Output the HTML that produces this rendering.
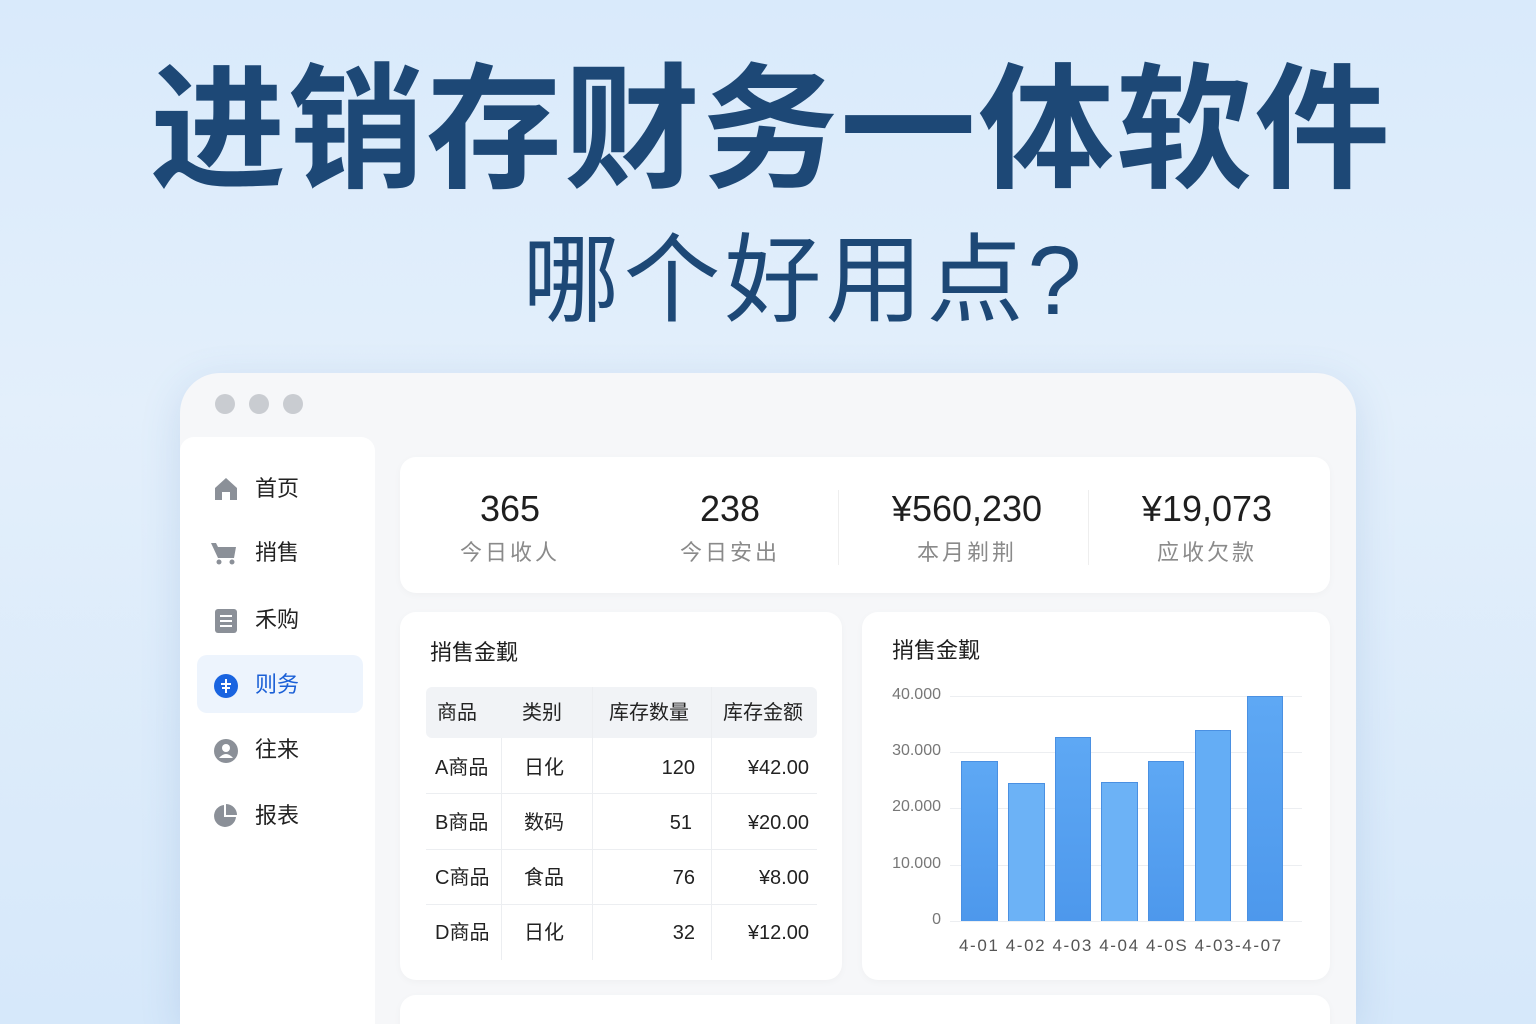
<!DOCTYPE html>
<html><head><meta charset="utf-8"><style>
*{margin:0;padding:0;box-sizing:border-box}
html{width:1536px;height:1024px;overflow:hidden}
body{width:1536px;height:1024px;overflow:hidden;position:relative;font-family:"Liberation Sans","Noto Sans CJK SC",sans-serif;background:linear-gradient(180deg,#d9eafb 0%,#e3effb 40%,#d6e8fa 100%);}
.a{position:absolute;white-space:nowrap}
.t1{left:0;width:1536px;text-align:center;top:60px;font-size:136px;font-weight:bold;color:#1d4876;letter-spacing:2px;line-height:140px;padding-left:6px}
.t2{left:36px;width:1536px;text-align:center;top:226px;font-size:97px;color:#1d4876;line-height:110px;letter-spacing:4px}
.win{left:180px;top:373px;width:1176px;height:651px;background:#f6f7f9;border-radius:40px 40px 0 0;box-shadow:0 10px 40px rgba(80,130,190,.18)}
.dot{width:20px;height:20px;border-radius:50%;background:#c9ccd1;top:394px}
.side{left:180px;top:437px;width:195px;height:587px;background:#fff;border-radius:14px 14px 0 0}
.nav{left:255px;font-size:22px;color:#222;line-height:30px}
.card{background:#fff;border-radius:16px;box-shadow:0 2px 8px rgba(0,0,0,.03)}
.val{font-size:36px;color:#1e1e1e;text-align:center;width:240px;line-height:40px}
.lab{font-size:22px;color:#8a8a8a;text-align:center;width:240px;line-height:30px;letter-spacing:3px}
.td{font-size:20px;color:#222;line-height:30px}
.yl{font-size:16px;color:#777;text-align:right;width:70px;left:871px}
.grid{left:950px;width:352px;height:1px;background:#eceef1}
.bar{background:linear-gradient(#5ea8f4,#4d98ec);border:1px solid #4a90e2;border-bottom:none}
</style></head><body>
<div class="a t1">进销存财务一体软件</div>
<div class="a t2">哪个好用点?</div>
<div class="a win"></div>
<div class="a dot" style="left:215px"></div>
<div class="a dot" style="left:249px"></div>
<div class="a dot" style="left:283px"></div>
<div class="a side"></div>
<div class="a" style="left:197px;top:655px;width:166px;height:58px;background:#edf4fd;border-radius:10px"></div>
<svg class="a" style="left:213px;top:476px" width="26" height="26" viewBox="0 0 26 26"><path d="M2 12 L13 2 L24 12 V24 H17 V16 H9 V24 H2Z" fill="#8b9098"/></svg>
<svg class="a" style="left:210px;top:540px" width="28" height="26" viewBox="0 0 28 26"><path d="M1 3 H6 L8 7 H26 L24 18 H8 Z" fill="#8b9098"/><circle cx="9" cy="22" r="2.5" fill="#8b9098"/><circle cx="22" cy="22" r="2.5" fill="#8b9098"/></svg>
<svg class="a" style="left:214px;top:608px" width="24" height="26" viewBox="0 0 24 26"><rect x="1" y="1" width="22" height="24" rx="3" fill="#8b9098"/><path d="M6 8H18M6 13H18M6 18H18" stroke="#fff" stroke-width="2"/></svg>
<svg class="a" style="left:213px;top:673px" width="26" height="26" viewBox="0 0 26 26"><circle cx="13" cy="13" r="12" fill="#1a64e0"/><path d="M13 6V20M8 11H18M9 15H17" stroke="#fff" stroke-width="2"/></svg>
<svg class="a" style="left:213px;top:738px" width="26" height="26" viewBox="0 0 26 26"><circle cx="13" cy="13" r="12" fill="#8b9098"/><circle cx="13" cy="10" r="4" fill="#fff"/><path d="M6 20 Q13 12 20 20" fill="#fff"/></svg>
<svg class="a" style="left:212px;top:803px" width="26" height="26" viewBox="0 0 26 26"><path d="M12 2 A11 11 0 1 0 24 14 H12Z" fill="#8b9098"/><path d="M14 1 A11 11 0 0 1 25 12 H14Z" fill="#8b9098"/></svg>
<div class="a nav" style="top:474px">首页</div>
<div class="a nav" style="top:538px">捎售</div>
<div class="a nav" style="top:605px">禾购</div>
<div class="a nav" style="top:670px;color:#1a5fd6">则务</div>
<div class="a nav" style="top:735px">往来</div>
<div class="a nav" style="top:801px">报表</div>

<div class="a card" style="left:400px;top:457px;width:930px;height:136px"></div>
<div class="a" style="left:838px;top:490px;width:1px;height:75px;background:#eee"></div>
<div class="a" style="left:1088px;top:490px;width:1px;height:75px;background:#eee"></div>
<div class="a val" style="left:390px;top:489px">365</div>
<div class="a val" style="left:610px;top:489px">238</div>
<div class="a val" style="left:847px;top:489px">¥560,230</div>
<div class="a val" style="left:1087px;top:489px">¥19,073</div>
<div class="a lab" style="left:390px;top:538px">今日收人</div>
<div class="a lab" style="left:610px;top:538px">今日安出</div>
<div class="a lab" style="left:847px;top:538px">本月剃荆</div>
<div class="a lab" style="left:1087px;top:538px">应收欠款</div>

<div class="a card" style="left:400px;top:612px;width:442px;height:368px"></div>
<div class="a" style="left:430px;top:635px;font-size:22px;color:#1e1e1e">捎售金觐</div>
<div class="a" style="left:426px;top:687px;width:391px;height:51px;background:#f1f3f6;border-radius:6px"></div>
<div class="a" style="left:501px;top:738px;width:1px;height:222px;background:#eceef1"></div>
<div class="a" style="left:592px;top:687px;width:1px;height:273px;background:#eceef1"></div>
<div class="a" style="left:711px;top:687px;width:1px;height:273px;background:#eceef1"></div>
<div class="a" style="left:426px;top:793px;width:391px;height:1px;background:#eceef1"></div>
<div class="a" style="left:426px;top:849px;width:391px;height:1px;background:#eceef1"></div>
<div class="a" style="left:426px;top:904px;width:391px;height:1px;background:#eceef1"></div>
<div class="a td" style="left:437px;top:698px">商品</div>
<div class="a td" style="left:522px;top:698px">类别</div>
<div class="a td" style="left:609px;top:698px">库存数量</div>
<div class="a td" style="left:723px;top:698px">库存金额</div>
<div class="a td" style="left:435px;top:753px">A商品</div><div class="a td" style="left:524px;top:753px">日化</div><div class="a td" style="left:594px;top:753px;width:101px;text-align:right">120</div><div class="a td" style="left:712px;top:753px;width:97px;text-align:right">¥42.00</div>
<div class="a td" style="left:435px;top:808px">B商品</div><div class="a td" style="left:524px;top:808px">数码</div><div class="a td" style="left:594px;top:808px;width:98px;text-align:right">51</div><div class="a td" style="left:712px;top:808px;width:97px;text-align:right">¥20.00</div>
<div class="a td" style="left:435px;top:863px">C商品</div><div class="a td" style="left:524px;top:863px">食品</div><div class="a td" style="left:594px;top:863px;width:101px;text-align:right">76</div><div class="a td" style="left:712px;top:863px;width:97px;text-align:right">¥8.00</div>
<div class="a td" style="left:435px;top:918px">D商品</div><div class="a td" style="left:524px;top:918px">日化</div><div class="a td" style="left:594px;top:918px;width:101px;text-align:right">32</div><div class="a td" style="left:712px;top:918px;width:97px;text-align:right">¥12.00</div>

<div class="a card" style="left:862px;top:612px;width:468px;height:368px"></div>
<div class="a" style="left:892px;top:633px;font-size:22px;color:#1e1e1e">捎售金觐</div>
<div class="a grid" style="top:696px"></div><div class="a grid" style="top:752px"></div><div class="a grid" style="top:808px"></div><div class="a grid" style="top:865px"></div><div class="a grid" style="top:921px"></div>
<div class="a yl" style="top:686px">40.000</div><div class="a yl" style="top:742px">30.000</div><div class="a yl" style="top:798px">20.000</div><div class="a yl" style="top:855px">10.000</div><div class="a yl" style="top:911px">0</div>
<div class="a bar" style="left:961px;top:761px;width:37px;height:160px"></div>
<div class="a bar" style="left:1008px;top:783px;width:37px;height:138px;background:#6cb2f6"></div>
<div class="a bar" style="left:1055px;top:737px;width:36px;height:184px"></div>
<div class="a bar" style="left:1101px;top:782px;width:37px;height:139px;background:#6cb2f6"></div>
<div class="a bar" style="left:1148px;top:761px;width:36px;height:160px"></div>
<div class="a bar" style="left:1195px;top:730px;width:36px;height:191px;background:#64adf5"></div>
<div class="a bar" style="left:1247px;top:696px;width:36px;height:225px"></div>
<div class="a" style="left:959px;top:936px;font-size:17px;color:#555;letter-spacing:1.6px">4-01 4-02 4-03 4-04 4-0S 4-03-4-07</div>

<div class="a card" style="left:400px;top:995px;width:930px;height:60px"></div>
</body></html>
